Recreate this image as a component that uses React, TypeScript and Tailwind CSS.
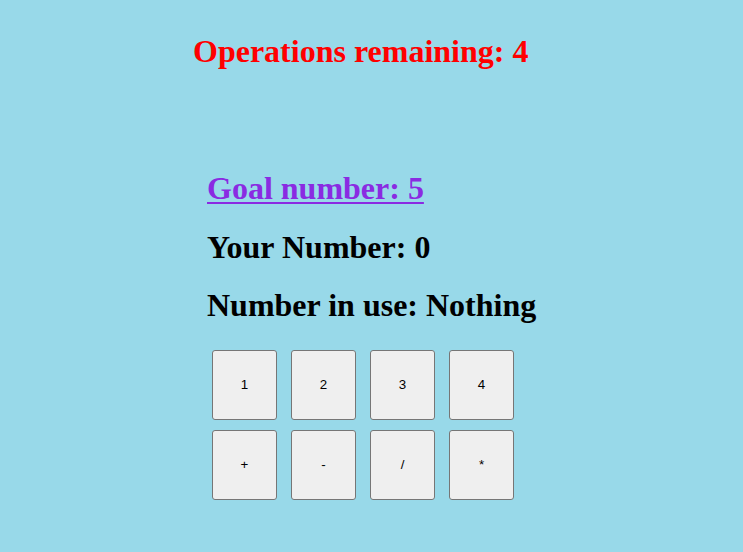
import React from "react";

const buttons = ["1", "2", "3", "4", "+", "-", "/", "*"];

export default function App() {
  return (
    <div className="min-h-[552px] w-full bg-[#98d9e9] font-['Liberation_Serif',serif]">
      <div className="pt-[33px] pl-[193px]">
        <h1 className="m-0 text-[32px] font-bold leading-[37px] text-[#ff0000]">
          Operations remaining: 4
        </h1>
      </div>
      <div className="mt-[100px] pl-[207px] flex flex-col">
        <h1 className="m-0 text-[32px] font-bold leading-[37px] text-[#8a2be2]">
          <a href="#" className="underline decoration-2 underline-offset-[3px]">
            Goal number: 5
          </a>
        </h1>
        <h1 className="mt-[21.5px] text-[32px] font-bold leading-[37px] text-black">Your Number: 0</h1>
        <h1 className="mt-[21.5px] text-[32px] font-bold leading-[37px] text-black">Number in use: Nothing</h1>
      </div>
      <div className="mt-[26px] ml-[212px] grid w-max grid-cols-[repeat(4,65px)] gap-x-[14px] gap-y-[10px]">
        {buttons.map((b) => (
          <button
            key={b}
            className="flex h-[70px] w-[65px] items-center justify-center rounded-[3px] border border-[#767676] bg-[#efefef] font-['Liberation_Sans',Arial,sans-serif] text-[13.33px] text-black"
          >
            {b}
          </button>
        ))}
      </div>
    </div>
  );
}
